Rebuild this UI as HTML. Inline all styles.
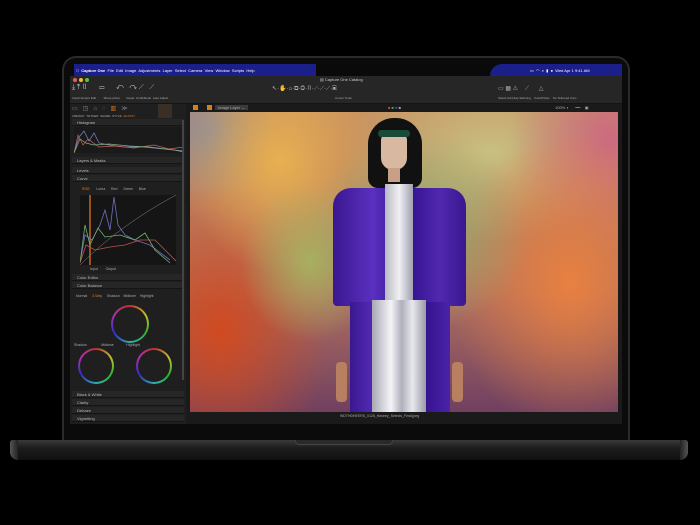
<!DOCTYPE html>
<html><head><meta charset="utf-8"><style>
*{margin:0;padding:0;box-sizing:border-box}
body{width:700px;height:525px;background:#000;position:relative;overflow:hidden;font-family:"Liberation Sans",sans-serif;color:#bbb}
.a{position:absolute}
.t{font-size:4px;white-space:nowrap;color:#aaa}
.row{position:absolute;left:2px;width:112px;height:7px;border-bottom:1px solid #151515;font-size:4px;color:#bbb;padding-left:5px;line-height:7px;background:#262626}
</style></head><body>
<!-- lid -->
<div class="a" style="left:62px;top:56px;width:568px;height:386px;border-radius:14px 14px 0 0;background:#0b0b0b;border:2px solid #2a2a2a;border-bottom:none"></div>
<!-- screen -->
<div class="a" style="left:70px;top:64px;width:552px;height:360px;background:#1c1c1c;overflow:hidden">
 <div class="a" style="left:0;top:0;width:552px;height:12px;background:#0a0a0a"></div>
 <div class="a" style="left:4px;top:0;width:242px;height:12px;background:#1a1f8a"></div>
 <div class="a" style="left:420px;top:0;width:132px;height:12px;background:#1a1f8a;border-radius:14px 0 0 0"></div>
 <div class="a t" style="left:6px;top:4px;color:#fff">&#63743;&nbsp; <b>Capture One</b>&nbsp; File&nbsp; Edit&nbsp; Image&nbsp; Adjustments&nbsp; Layer&nbsp; Select&nbsp; Camera&nbsp; View&nbsp; Window&nbsp; Scripts&nbsp; Help</div>
 <div class="a t" style="left:460px;top:4px;color:#fff">▭ &nbsp;◠ &nbsp;⌕ &nbsp;▮ &nbsp;● &nbsp;Wed Apr 1 9:41 AM</div>
 <div class="a" style="left:0;top:12px;width:552px;height:28px;background:#262626;border-bottom:1px solid #141414"></div>
 <div class="a" style="left:3px;top:14px;width:4px;height:4px;border-radius:50%;background:#ee5a52"></div>
 <div class="a" style="left:9px;top:14px;width:4px;height:4px;border-radius:50%;background:#f0bd30"></div>
 <div class="a" style="left:15px;top:14px;width:4px;height:4px;border-radius:50%;background:#5fc23f"></div>
 <div class="a t" style="left:250px;top:13px;color:#ccc">▤ Capture One Catalog</div>
 <div class="a t" style="left:2px;top:20px;font-size:7px;color:#ccc">⤓ ⤒ ▯ &nbsp;&nbsp;&nbsp;&nbsp; ▭ &nbsp;&nbsp;&nbsp;&nbsp; ↶ &nbsp;&nbsp;↷ ⟋ &nbsp;&nbsp;⟋</div>
 <div class="a t" style="left:2px;top:32px;font-size:3px">Import Export Edit &nbsp;&nbsp;&nbsp;&nbsp;&nbsp;&nbsp;&nbsp; Share photo &nbsp;&nbsp;&nbsp;&nbsp;&nbsp;&nbsp; Reset &nbsp;Undo/Redo &nbsp;Auto Adjust</div>
 <div class="a t" style="left:202px;top:21px;font-size:6px;color:#bbb">↖·<span style="color:#e08a30">✋</span>·⌂·⧉·◎·▯·⟋·⟋·⟋·▣</div>
 <div class="a t" style="left:265px;top:32px;font-size:3px">Cursor Tools</div>
 <div class="a t" style="left:428px;top:21px;font-size:6px">▭ ▦ ⚠ &nbsp;&nbsp;&nbsp;⟋ &nbsp;&nbsp;&nbsp;&nbsp;&nbsp;△</div>
 <div class="a t" style="left:428px;top:32px;font-size:3px">Select Grid Exp.Warning &nbsp;&nbsp;&nbsp;ColorPicker &nbsp;&nbsp;&nbsp;No Tethered Cam</div>
 <!-- left panel -->
 <div class="a" style="left:0;top:40px;width:116px;height:320px;background:#1f1f1f"></div>
 <div class="a t" style="left:2px;top:41px;font-size:6px;color:#888">▭ &nbsp;&nbsp;◳ &nbsp;&nbsp;⌂ &nbsp;&nbsp;◌ &nbsp;&nbsp;<span style="color:#e07a20">▥</span> &nbsp;&nbsp;≫</div>
 <div class="a" style="left:88px;top:40px;width:14px;height:14px;background:#3a2f25"></div>
 <div class="a t" style="left:2px;top:50px;font-size:3px">LIBRARY &nbsp;TETHER &nbsp;SHARE &nbsp;STYLE &nbsp;<span style="color:#e07a20">ADJUST</span></div>
 <div class="row" style="top:55px">Histogram</div>
 <div class="a" style="left:4px;top:63px;width:110px;height:26px;background:#1a1a1a"></div>
 <svg class="a" style="left:4px;top:63px" width="110" height="26"><polyline fill="none" stroke="#7a8ad0" stroke-width=".7" points="0,26 5,10 10,4 15,14 20,6 25,16 35,18 50,20 70,20 90,22 110,24"/><polyline fill="none" stroke="#c86060" stroke-width=".7" points="0,26 4,8 9,18 14,12 25,20 40,19 60,21 80,18 95,22 110,20"/><polyline fill="none" stroke="#80b080" stroke-width=".7" points="0,26 6,12 12,16 20,18 35,17 55,19 75,20 100,23 110,25"/></svg>
 <div class="row" style="top:93px">Layers &amp; Masks</div>
 <div class="row" style="top:103px">Levels</div>
 <div class="row" style="top:111px">Curve</div>
 <div class="a t" style="left:12px;top:123px;font-size:3.5px"><span style="color:#e07a20">RGB</span> &nbsp;&nbsp;&nbsp;&nbsp;&nbsp;&nbsp;Luma &nbsp;&nbsp;&nbsp;&nbsp;&nbsp;Red &nbsp;&nbsp;&nbsp;&nbsp;&nbsp;Green &nbsp;&nbsp;&nbsp;&nbsp;&nbsp;Blue</div>
 <div class="a" style="left:10px;top:131px;width:96px;height:70px;background:#151515"></div>
 <svg class="a" style="left:10px;top:131px" width="96" height="70"><line x1="10" y1="0" x2="10" y2="70" stroke="#c06a20" stroke-width="1.5"/><polyline fill="none" stroke="#7070c0" stroke-width=".8" points="0,68 5,40 12,45 20,30 25,15 30,35 34,2 38,30 45,40 55,45 70,50 90,65"/><polyline fill="none" stroke="#70b070" stroke-width=".8" points="0,68 5,30 10,50 18,33 25,42 40,40 55,45 65,38 75,55 90,68"/><polyline fill="none" stroke="#c05050" stroke-width=".8" points="0,68 6,50 15,55 30,52 45,50 60,45 75,45 85,55 96,66"/><path d="M0,70 Q40,30 96,0" stroke="#888" stroke-width=".5" fill="none"/></svg>
 <div class="a t" style="left:20px;top:203px;font-size:3.5px">Input &nbsp;&nbsp;&nbsp;&nbsp;&nbsp;&nbsp;&nbsp;Output</div>
 <div class="row" style="top:210px">Color Editor</div>
 <div class="row" style="top:218px">Color Balance</div>
 <div class="a t" style="left:6px;top:230px;font-size:3.5px">Normal &nbsp;&nbsp;&nbsp;&nbsp;<span style="color:#e07a20">3-Way</span> &nbsp;&nbsp;&nbsp;&nbsp;Shadow &nbsp;&nbsp;&nbsp;Midtone &nbsp;&nbsp;&nbsp;Highlight</div>
 <div class="a" style="left:41px;top:241px;width:38px;height:38px;border-radius:50%;background:conic-gradient(#c03030,#c0c030,#30b030,#30b0b0,#3030c0,#b030b0,#c03030)"></div>
 <div class="a" style="left:43px;top:243px;width:34px;height:34px;border-radius:50%;background:#1f1f1f"></div>
 <div class="a t" style="left:4px;top:279px;font-size:3.5px">Shadow &nbsp;&nbsp;&nbsp;&nbsp;&nbsp;&nbsp;&nbsp;&nbsp;&nbsp;&nbsp;&nbsp;&nbsp;&nbsp;&nbsp;Midtone &nbsp;&nbsp;&nbsp;&nbsp;&nbsp;&nbsp;&nbsp;&nbsp;&nbsp;&nbsp;&nbsp;&nbsp;Highlight</div>
 <div class="a" style="left:8px;top:284px;width:36px;height:36px;border-radius:50%;background:conic-gradient(#c03030,#c0c030,#30b030,#30b0b0,#3030c0,#b030b0,#c03030)"></div>
 <div class="a" style="left:10px;top:286px;width:32px;height:32px;border-radius:50%;background:#1f1f1f"></div>
 <div class="a" style="left:66px;top:284px;width:36px;height:36px;border-radius:50%;background:conic-gradient(#c03030,#c0c030,#30b030,#30b0b0,#3030c0,#b030b0,#c03030)"></div>
 <div class="a" style="left:68px;top:286px;width:32px;height:32px;border-radius:50%;background:#1f1f1f"></div>
 <div class="row" style="top:327px">Black &amp; White</div>
 <div class="row" style="top:335px">Clarity</div>
 <div class="row" style="top:343px">Dehaze</div>
 <div class="row" style="top:351px">Vignetting</div>
 <div class="a" style="left:112px;top:56px;width:2px;height:260px;background:#444"></div>
 <!-- viewer -->
 <div class="a" style="left:116px;top:40px;width:436px;height:320px;background:#1a1a1a"></div>
 <div class="a" style="left:123px;top:41px;width:5px;height:5px;background:#d08020"></div>
 <div class="a" style="left:137px;top:41px;width:5px;height:5px;background:#d08020"></div>
 <div class="a t" style="left:145px;top:41px;background:#3a3a3a;padding:0 3px">Image Layer ⌄</div>
 <div class="a t" style="left:318px;top:41px"><span style="color:#c44">■</span> <span style="color:#4a4">■</span> <span style="color:#44c">■</span> ■</div>
 <div class="a t" style="left:485px;top:41px">100% ◐ &nbsp;&nbsp;&nbsp;&nbsp;&nbsp;━━ &nbsp;&nbsp;&nbsp;▣</div>
 <!-- image -->
 <div class="a" style="left:120px;top:48px;width:428px;height:300px;overflow:hidden;background:
  radial-gradient(ellipse 110px 100px at 230px 120px,#94b070,transparent),
  radial-gradient(ellipse 70px 80px at 120px 150px,#a8b060,transparent),
  radial-gradient(ellipse 100px 110px at 90px 50px,#e8b050,transparent),
  radial-gradient(ellipse 110px 150px at 30px 220px,#d04a20,transparent),
  radial-gradient(ellipse 120px 150px at 380px 170px,#e88040,transparent),
  radial-gradient(ellipse 100px 110px at 420px 30px,#cc6a80,transparent),
  radial-gradient(ellipse 70px 70px at 20px 20px,#8a8a9c,transparent),
  radial-gradient(ellipse 150px 90px at 300px 40px,#c8c080,transparent),
  linear-gradient(180deg,#c89060,#b07060 60%,#704060)">
  <div class="a" style="left:146px;top:250px;width:11px;height:40px;background:#b88060;border-radius:4px"></div>
  <div class="a" style="left:262px;top:250px;width:11px;height:40px;background:#b88060;border-radius:4px"></div>
  <div class="a" style="left:178px;top:6px;width:54px;height:70px;background:#111;border-radius:26px 26px 10px 10px"></div>
  <div class="a" style="left:191px;top:22px;width:26px;height:36px;background:#d8b8a0;border-radius:6px 6px 12px 12px"></div>
  <div class="a" style="left:188px;top:18px;width:32px;height:7px;background:#1a4a38;border-radius:3px"></div>
  <div class="a" style="left:198px;top:56px;width:12px;height:14px;background:#c8a088"></div>
  <div class="a" style="left:143px;top:76px;width:133px;height:118px;background:linear-gradient(90deg,#3a1890,#5a30c0 30%,#30108a 55%,#5028b0 80%,#3a1890);border-radius:18px 18px 4px 4px"></div>
  <div class="a" style="left:160px;top:190px;width:100px;height:112px;background:linear-gradient(90deg,#3a1890,#5a30c0 30%,#30108a 70%,#4a22a8)"></div>
  <div class="a" style="left:195px;top:72px;width:28px;height:118px;background:linear-gradient(90deg,#b8b8c0,#f0f0f4,#a0a0b0)"></div>
  <div class="a" style="left:182px;top:188px;width:54px;height:114px;background:linear-gradient(90deg,#a8a8b4,#f4f4f8 35%,#b0b0bc 55%,#e8e8ee 75%,#9a9aa8)"></div>
 </div>
 <div class="a t" style="left:270px;top:350px;font-size:3.5px">WDTHDHEERS_0126_Haveey_Selects_Final.jpeg</div>
</div>
<!-- base -->
<div class="a" style="left:10px;top:440px;width:678px;height:20px;border-radius:3px 3px 8px 8px;background:linear-gradient(180deg,#3a3a3a,#1c1c1c 40%,#111 100%)"></div>
<div class="a" style="left:10px;top:440px;width:8px;height:20px;background:linear-gradient(90deg,#555,#222);border-radius:3px 0 0 8px"></div>
<div class="a" style="left:680px;top:440px;width:8px;height:20px;background:linear-gradient(270deg,#555,#222);border-radius:0 3px 8px 0"></div>
<div class="a" style="left:295px;top:440px;width:98px;height:5px;background:#2a2a2a;border-radius:0 0 4px 4px;border:1px solid #444;border-top:none"></div>
</body></html>
